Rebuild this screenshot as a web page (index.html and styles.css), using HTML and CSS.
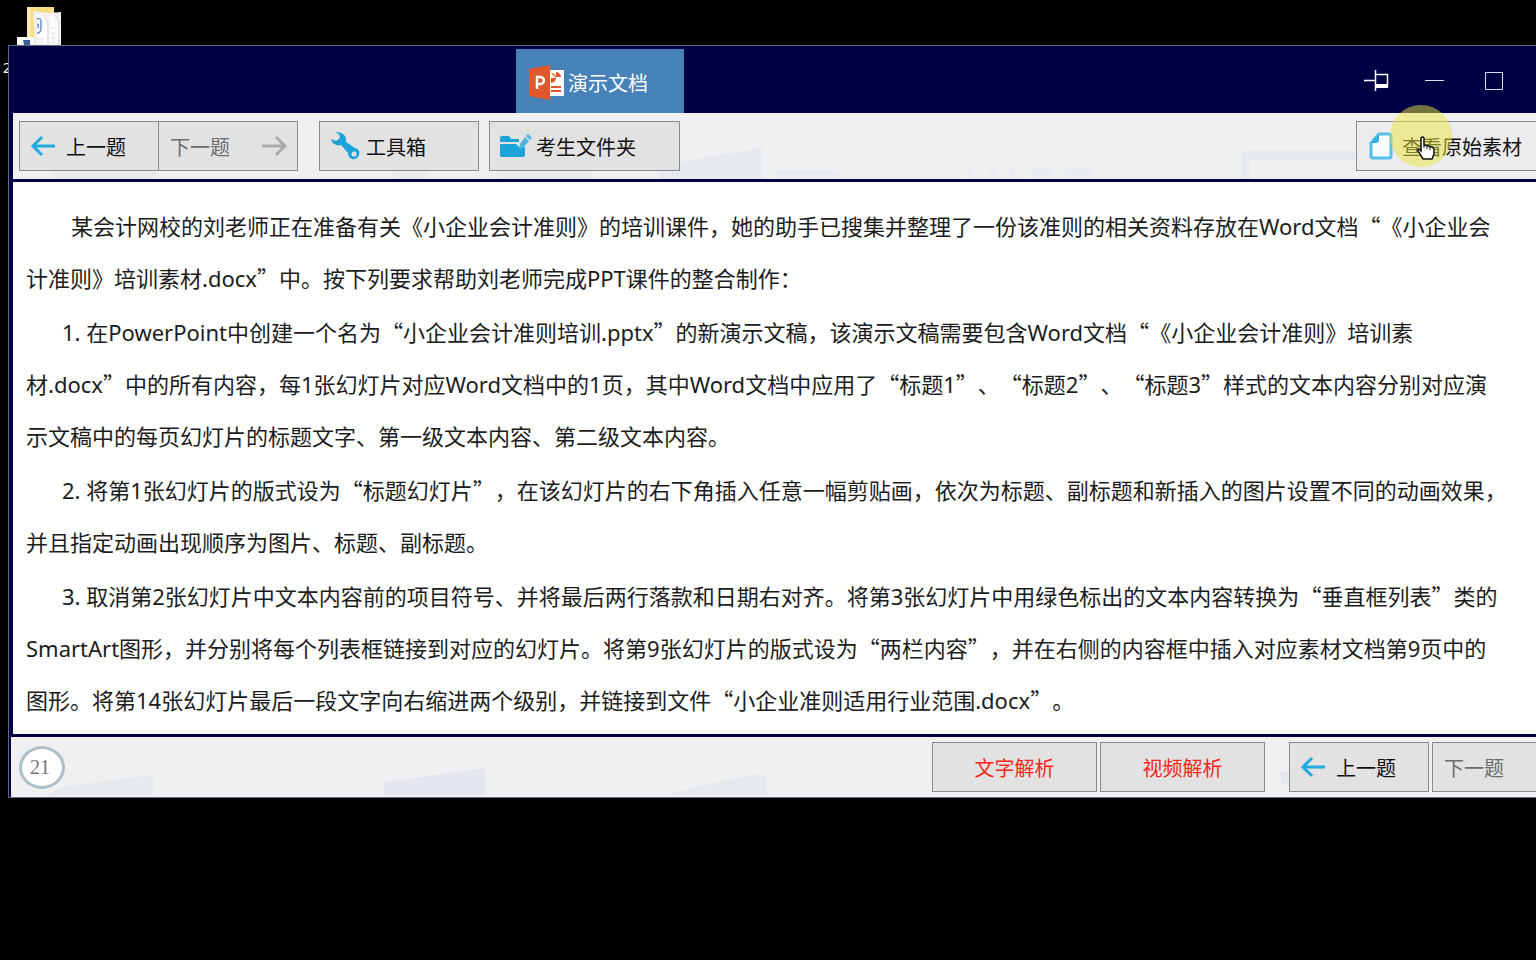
FILE: index.html
```
<!DOCTYPE html>
<html lang="zh-CN">
<head>
<meta charset="utf-8">
<title>演示文档</title>
<link rel="stylesheet" href="styles.css">
</head>
<body>
<div class="shortcut">
  <svg class="shortcut-icon" width="46" height="42" viewBox="0 0 46 42" aria-hidden="true">
    <path d="M10 1h27v41H10z" fill="#f7dc83"/>
    <path d="M10 1h4v41h-4z" fill="#fbe9ab"/>
    <path d="M16 5l14 2 14-1v36H18z" fill="#f3f0f3"/>
    <path d="M20 9l8 1 4 6v26H20z" fill="#fff"/>
    <path d="M32 9h7l5 6v27H32z" fill="#fafafa"/>
    <path d="M26 9l5 7v26M38 9l4 6v27" fill="none" stroke="#cfc9d2" stroke-width="1"/>
    <path d="M20 13q4-2 4 3v6q0 5-4 5M20 18q2 0 1 4" fill="none" stroke="#6f8fc4" stroke-width="1.500"/>
    <path d="M20 33h7M20 36h7M20 39h7M34 22h4M34 27h4M34 32h4M34 37h4" stroke="#ddd" />
    <path d="M0 31h17v11H0z" fill="#fff"/>
    <path d="M6 34h7v8H4l3-3z" fill="#3c5c98"/>
  </svg>
  <span class="shortcut-label">2</span>
</div>

<div class="window">
  <header class="titlebar">
    <button class="tab" type="button">
      <svg width="36" height="36" viewBox="0 0 36 36" aria-hidden="true">
        <path d="M20 5h15v26H20z" fill="#fff"/>
        <path d="M22 8a5 5 0 1 1 0 10v-5h5" fill="#e2572b"/>
        <path d="M27 7v5h5a5 5 0 0 0-5-5z" fill="#e2572b"/>
        <path d="M22 22h10M22 26h10" stroke="#e2572b" stroke-width="2"/>
        <path d="M0 4l21-4v35L0 31z" fill="#e2572b"/>
        <path d="M8 24V12h3.500a3.500 3.500 0 0 1 0 7H8" fill="none" stroke="#fff" stroke-width="2.500"/>
      </svg>
      <span>演示文档</span>
    </button>
    <div class="controls">
      <button class="control" type="button" aria-label="固定">
        <svg width="28" height="24" viewBox="0 0 28 24"><path d="M2 11.500h11M13.500 1v21M14 5.500h11.500v12" fill="none" stroke="#fff" stroke-width="1.500"/><path d="M14 15h12v4H14z" fill="#fff"/></svg>
      </button>
      <button class="control" type="button" aria-label="最小化">
        <svg width="28" height="24" viewBox="0 0 28 24"><path d="M4 11.500h19" stroke="#dcdcf4"/></svg>
      </button>
      <button class="control" type="button" aria-label="最大化">
        <svg width="28" height="24" viewBox="0 0 28 24"><path d="M5.500 3.500h17v17h-17z" fill="none" stroke="#dcdcf4"/></svg>
      </button>
    </div>
  </header>

  <nav class="toolbar">
    <svg class="watermark" width="1527" height="66" viewBox="0 0 1527 66" aria-hidden="true">
      <path d="M40 58h104v8H40zM380 57h34v9h-34zM484 57h55l40-4v13h-95z" fill="#e8ecec"/>
      <path d="M647 66V52l102-17v31z" fill="#e6e9ed"/>
      <path d="M762 57h64v8h-64zM954 54h6v11h-6zM976 53h8v12h-8zM996 55h5v10h-5zM1018 55h22v10h-22zM1052 56h28v9h-28z" fill="#e9ecee"/>
      <path d="M1228 38h115v9h-106v19h-9z" fill="#e6eaed"/>
    </svg>
    <div class="pair">
      <button class="btn btn-nav" type="button">
        <svg width="26" height="24" viewBox="0 0 26 24" aria-hidden="true"><path d="M25 12H3M12 3l-9 9 9 9" fill="none" stroke="#22a9dd" stroke-width="3"/></svg>
        <span>上一题</span>
      </button>
      <button class="btn btn-next" type="button" disabled>
        <span>下一题</span>
        <svg width="26" height="24" viewBox="0 0 26 24" aria-hidden="true"><path d="M1 12h23M15 3l9 9-9 9" fill="none" stroke="#aaa" stroke-width="3"/></svg>
      </button>
    </div>
    <button class="btn btn-tools" type="button">
      <svg width="30" height="30" viewBox="0 0 30 30" aria-hidden="true"><path d="M4 1.500C8 .5 12 1.500 14 5c1 2 1 4 1 6l9 6c4 1 5 4 4 7s-4 5-7 4-4-3-4-6l-7-8c-3 1-6 0-8-2-1-1-1.500-2-2-4l5 2 4-3-1-4z" fill="#1ba3da"/><circle cx="23" cy="23" r="2.500" fill="#e3e3e3"/></svg>
      <span>工具箱</span>
    </button>
    <button class="btn btn-folder" type="button">
      <svg width="32" height="28" viewBox="0 0 32 28" aria-hidden="true"><path d="M0 6q0-2 2-2h7l2 3h8v3H0zM0 12h16l3 3h6v8q0 2-2 2H2q-2 0-2-2z" fill="#1ba3da"/><path d="M20 12l5-7 4 4-6 7-4 1zM26 4l2-2 4 4-2 2z" fill="#4bb5dd"/></svg>
      <span>考生文件夹</span>
    </button>
    <button class="btn btn-source" type="button">
      <svg width="24" height="28" viewBox="0 0 24 28" aria-hidden="true"><path d="M10 2h10q2 0 2 2v20q0 2-2 2H4q-2 0-2-2V11z" fill="#f8fcfe" stroke="#52bfe8" stroke-width="3"/><path d="M10 2v6q0 3-3 3H2z" fill="#35aee0"/></svg>
      <span>查看原始素材</span>
    </button>
  </nav>

  <main class="question">
    <p class="lead">某会计网校的刘老师正在准备有关《小企业会计准则》的培训课件，她的助手已搜集并整理了一份该准则的相关资料存放在Word文档<span class="q">“</span>《小企业会<br>计准则》培训素材.docx<span class="q">”</span>中。按下列要求帮助刘老师完成PPT课件的整合制作：</p>
    <p>1. 在PowerPoint中创建一个名为<span class="q">“</span>小企业会计准则培训.pptx<span class="q">”</span>的新演示文稿，该演示文稿需要包含Word文档<span class="q">“</span>《小企业会计准则》培训素<br>材.docx<span class="q">”</span>中的所有内容，每1张幻灯片对应Word文档中的1页，其中Word文档中应用了<span class="q">“</span>标题1<span class="q">”</span>、<span class="q">“</span>标题2<span class="q">”</span>、<span class="q">“</span>标题3<span class="q">”</span>样式的文本内容分别对应演<br>示文稿中的每页幻灯片的标题文字、第一级文本内容、第二级文本内容。</p>
    <p>2. 将第1张幻灯片的版式设为<span class="q">“</span>标题幻灯片<span class="q">”</span>，在该幻灯片的右下角插入任意一幅剪贴画，依次为标题、副标题和新插入的图片设置不同的动画效果，<br>并且指定动画出现顺序为图片、标题、副标题。</p>
    <p>3. 取消第2张幻灯片中文本内容前的项目符号、并将最后两行落款和日期右对齐。将第3张幻灯片中用绿色标出的文本内容转换为<span class="q">“</span>垂直框列表<span class="q">”</span>类的<br>SmartArt图形，并分别将每个列表框链接到对应的幻灯片。将第9张幻灯片的版式设为<span class="q">“</span>两栏内容<span class="q">”</span>，并在右侧的内容框中插入对应素材文档第9页中的<br>图形。将第14张幻灯片最后一段文字向右缩进两个级别，并链接到文件<span class="q">“</span>小企业准则适用行业范围.docx<span class="q">”</span>。</p>
  </main>

  <footer class="footer">
    <svg class="watermark" width="1527" height="58" viewBox="0 0 1527 58" aria-hidden="true">
      <path d="M36 58l14-8 92-12v20zM650 58l90-20h15v20z" fill="#e5eaec"/>
      <path d="M373 58V45l102-14v27zM1270 35h22v12h-22z" fill="#e4e8ee"/>
    </svg>
    <span class="number">21</span>
    <div class="answers">
      <button class="btn btn-answer" type="button">文字解析</button>
      <button class="btn btn-answer" type="button">视频解析</button>
    </div>
    <div class="steps">
      <button class="btn btn-nav" type="button">
        <svg width="26" height="24" viewBox="0 0 26 24" aria-hidden="true"><path d="M25 12H3M12 3l-9 9 9 9" fill="none" stroke="#22a9dd" stroke-width="3"/></svg>
        <span>上一题</span>
      </button>
      <button class="btn btn-next" type="button" disabled><span>下一题</span></button>
    </div>
  </footer>
</div>

<div class="pointer" aria-hidden="true">
  <svg width="20" height="26" viewBox="0 0 20 26"><path d="M5 2q2-2 3 0v7l8 2q2 1 2 3v4l-2 5H7l-5-8q-1-2 1-2l2 2z" fill="#fff" stroke="#111" stroke-width="1.500"/><path d="M8 9v3M11 10v3M14 11v3" stroke="#111"/></svg>
</div>
</body>
</html>
```
FILE: styles.css
```
* {
  box-sizing: border-box;
}

body {
  position: relative;
  min-height: 100vh;
  margin: 0;
  overflow: hidden;
  background: #000;
  font-family: "Noto Sans", "Noto Sans CJK SC", sans-serif;
}

button {
  margin: 0;
  padding: 0;
  font: inherit;
  white-space: nowrap;
}

svg {
  flex: none;
}

/* Desktop shortcut, partly behind the window */
.shortcut {
  position: absolute;
  top: 6px;
  left: 3px;
  display: flex;
  flex-direction: column;
  gap: 10px;
}

.shortcut-icon {
  margin-left: 14px;
}

.shortcut-label {
  color: #fff;
  font-size: 14px;
  line-height: 20px;
}

/* The window runs past the right edge of the desktop */
.window {
  position: relative;
  margin: 45px -48px 0 8px;
  border: 1px solid #66667f;
  background: #000045;
}

.titlebar {
  display: flex;
  justify-content: space-between;
  align-items: flex-end;
  height: 67px;
  padding: 3px 60px 0 507px;
}

.tab {
  display: flex;
  align-items: center;
  gap: 3px;
  width: 168px;
  height: 64px;
  padding: 3px 0 0 13px;
  border: 0;
  background: #4682b8;
  color: #fff;
  font-size: 20px;
}

.controls {
  display: flex;
  align-items: center;
  align-self: center;
  gap: 31px;
  padding-right: 15px;
}

.control {
  display: flex;
  border: 0;
  background: none;
}

.toolbar {
  position: relative;
  display: flex;
  align-items: center;
  height: 66px;
  margin-left: 4px;
  padding: 0 12px 0 6px;
  background: #f0f0f2;
}

.watermark {
  position: absolute;
  top: 0;
  left: 0;
}

.btn {
  position: relative;
  display: flex;
  align-items: center;
  height: 50px;
  border: 1px solid #8b8b8f;
  background: #e2e2e2;
  color: #111;
  font-size: 20px;
}

.pair {
  display: flex;
  margin-right: 21px;
}

.pair .btn + .btn {
  border-left: 0;
}

.btn-nav {
  gap: 10px;
  width: 140px;
  padding-left: 10px;
}

.btn-next {
  justify-content: space-between;
  width: 139px;
  padding: 0 10px 0 11px;
  color: #6c6c6c;
}

.btn-tools {
  gap: 5px;
  width: 160px;
  margin-right: 10px;
  padding-left: 11px;
}

.btn-folder {
  gap: 4px;
  width: 191px;
  padding-left: 10px;
}

.btn-source {
  gap: 9px;
  width: 215px;
  margin-left: auto;
  padding-left: 12px;
  background: #ececee;
}

.question {
  margin: 3px 0 3px 4px;
  padding: 18px 13px 6px;
  background: #fff;
  color: #1c1c1c;
  font-size: 22px;
  line-height: 52px;
  text-spacing-trim: space-all;
  white-space: nowrap;
}

.question p {
  margin: 0 0 2px;
  text-indent: 36px;
}

.question .lead {
  text-indent: 45px;
}

/* Full-width quotation marks */
.q {
  font-family: "Noto Sans CJK SC", sans-serif;
  line-height: 1;
}

.footer {
  position: relative;
  display: flex;
  align-items: center;
  height: 60px;
  margin-left: 2px;
  padding: 0 12px 0 8px;
  background: #f0f0f2;
}

.number {
  position: relative;
  display: flex;
  align-items: center;
  justify-content: center;
  width: 46px;
  height: 43px;
  padding-right: 4px;
  border: 3px solid #aebfc8;
  border-radius: 50%;
  background: #fff;
  color: #777;
  font-family: "Liberation Serif", serif;
  font-size: 20px;
}

.answers {
  display: flex;
  gap: 3px;
  margin: 0 24px 0 auto;
}

.btn-answer {
  justify-content: center;
  width: 165px;
  color: #f5271c;
}

.steps {
  display: flex;
  gap: 3px;
}

/* Click highlight and hand cursor */
.pointer {
  position: absolute;
  top: 105px;
  left: 1390px;
  width: 62px;
  height: 62px;
  padding: 31px 0 0 26px;
  border-radius: 50%;
  background: rgba(234, 230, 60, 0.5);
}
```
